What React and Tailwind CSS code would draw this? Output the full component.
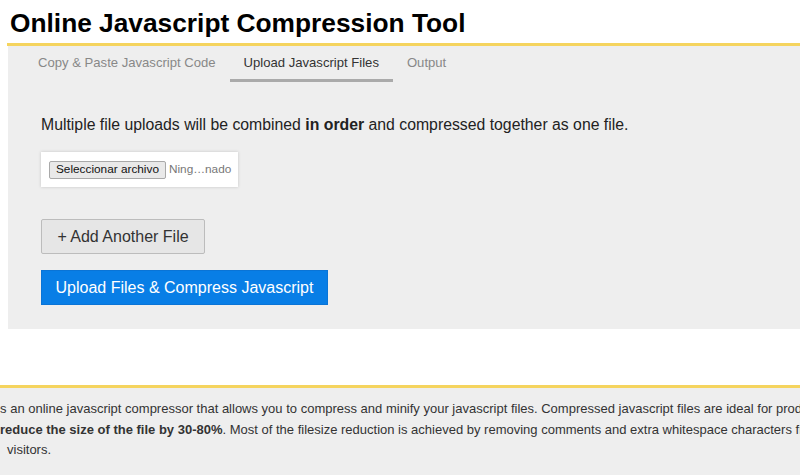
export default function App() {
  const tabs = [
    { label: 'Copy & Paste Javascript Code', active: false },
    { label: 'Upload Javascript Files', active: true },
    { label: 'Output', active: false },
  ]

  return (
    <div className="w-[800px] h-[475px] overflow-hidden bg-white font-['Liberation_Sans',Arial,sans-serif] text-[#222]">
      {/* Header */}
      <h1 className="pl-[10px] pt-[8px] h-[43px] text-[26.3px] leading-[30px] font-bold text-black whitespace-nowrap">
        Online Javascript Compression Tool
      </h1>
      <div className="ml-[7px] h-[3px] bg-[#f5d45e]" />

      {/* Tool panel */}
      <div className="ml-[8px] h-[283px] bg-[#eeeeee]">
        <div className="flex pl-[16px] pt-[7px]">
          {tabs.map(t => (
            <div
              key={t.label}
              className={`px-[14px] pt-[1px] pb-[7px] text-[13.1px] leading-[18px] whitespace-nowrap border-b-[3px] ${t.active ? 'text-[#333] border-[#aaaaaa]' : 'text-[#888] border-transparent'}`}
            >
              {t.label}
            </div>
          ))}
        </div>

        <div className="pl-[33px]">
          <p className="mt-[33px] text-[15.8px] leading-[20px] text-[#222] whitespace-nowrap">
            Multiple file uploads will be combined <b>in order</b> and compressed together as one file.
          </p>

          <div className="mt-[17px] w-[197px] h-[35px] bg-white shadow-[0_0_3px_rgba(0,0,0,0.18)] flex items-center pl-[8px] gap-[3px] text-[11.8px] whitespace-nowrap">
            <span className="h-[18px] px-[6px] flex items-center bg-[#e9e9e9] border border-[#a9a9a9] rounded-[2px] text-[#111] leading-none">
              Seleccionar archivo
            </span>
            <span className="text-[#777]">Ning…nado</span>
          </div>

          <button className="mt-[32px] block w-[164px] h-[35px] bg-[#e6e6e6] border border-[#bcbcbc] rounded-[2px] text-[16px] text-[#333]">
            + Add Another File
          </button>

          <button className="mt-[16px] block w-[287px] h-[35px] bg-[#087ee6] border border-[#0a74d6] text-[16px] text-white">
            Upload Files &amp; Compress Javascript
          </button>
        </div>
      </div>

      {/* Description */}
      <div className="mt-[56px] h-[3px] bg-[#f5d45e]" />
      <div className="h-[90px] bg-[#eeeeee] pt-[11px] text-[13px] leading-[20.5px] text-[#333] whitespace-nowrap">
        <div className="-ml-[31px]">
          This is an online javascript compressor that allows you to compress and minify your javascript files. Compressed javascript files are ideal for production.
        </div>
        <div>
          <b>reduce the size of the file by 30-80%</b>. Most of the filesize reduction is achieved by removing comments and extra whitespace characters from the code.
        </div>
        <div className="pl-[7px]">visitors.</div>
      </div>
    </div>
  )
}
